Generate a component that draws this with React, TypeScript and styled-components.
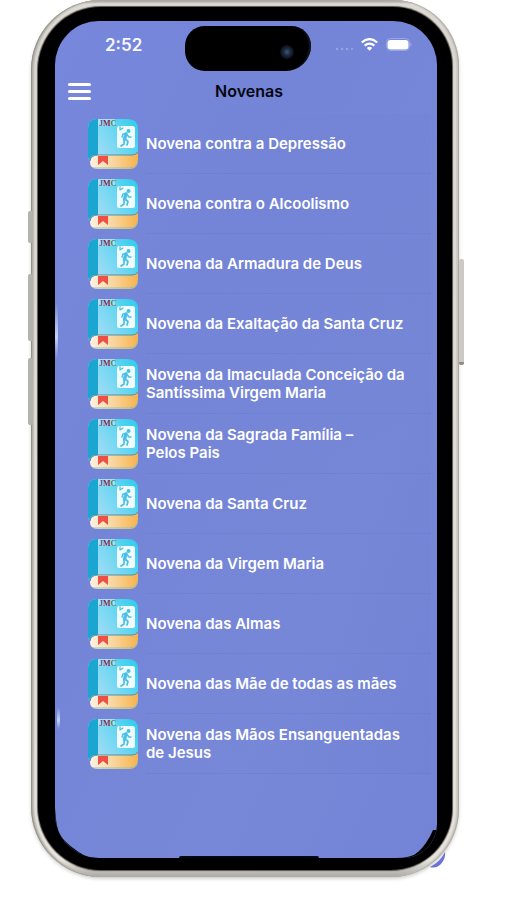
import React from "react";
import styled, { createGlobalStyle } from "styled-components";

const GlobalStyle = createGlobalStyle`
  *, *::before, *::after { box-sizing: border-box; }
  body { margin: 0; background: #fff; font-family: Inter, "Liberation Sans", sans-serif; }
`;

const Page = styled.main`
  padding: 0 48px 23px 31px;
`;

const Phone = styled.div`
  position: relative;
  padding: 7px;
  border-radius: 70px 66px 68px 70px;
  background: linear-gradient(to bottom, #98948f, #dedad4 4px, #e4e2dc 50%, #e9e7df 98%, #aaa9a2);
  box-shadow:
    inset 1px 0 1px #8f8e8a,
    inset 3px 0 2px #b4b2ac,
    inset -1px 0 1px #aaa8a3,
    inset -3px 0 2px #cbc8c2,
    0 2px 4px -1px #b9b9b5;
`;

const Bezel = styled.div`
  padding: 14px 15px 12px 17px;
  border-radius: 63px 59px 61px 63px;
  background: #000;
  box-shadow: 0 0 1px 1px #55534f;
`;

const Screen = styled.div`
  position: relative;
  overflow: hidden;
  padding-bottom: 84px;
  border-radius: 44px 44px 34px 44px;
  background: linear-gradient(115deg, #7787dc, #7484d6 35%, #7888d9 70%, #7383d5);
`;

const SideKey = styled.span<{ $side: "left" | "right"; $top: number; $height: number }>`
  position: absolute;
  ${(p) => p.$side}: ${(p) => (p.$side === "left" ? "-3px" : "-5px")};
  top: ${(p) => p.$top}px;
  width: 5px;
  height: ${(p) => p.$height}px;
  border-radius: 2px;
  background: ${(p) => (p.$side === "left" ? "#b4b3ae" : "#cdcac6")};
  border-bottom: ${(p) => (p.$side === "right" ? "3px solid #8d8c89" : "0")};
`;

const Fringe = styled.svg`
  position: absolute;
  right: 13px;
  bottom: 8px;
`;

const Glint = styled.span<{ $top: number; $height: number; $left: number }>`
  position: absolute;
  left: ${(p) => p.$left}px;
  top: ${(p) => p.$top}px;
  width: 3px;
  height: ${(p) => p.$height}px;
  border-radius: 50%;
  background: linear-gradient(transparent, #c5d2fa 60%, transparent);
`;

const StatusBar = styled.div`
  display: grid;
  grid-template-columns: 1fr 126px 1fr;
  padding: 5px 0 0 3px;
  color: #f7f8ff;
`;

const Clock = styled.time`
  padding: 8px 0 0 47px;
  font-size: 17px;
  font-weight: 600;
  line-height: 22px;
`;

const Island = styled.div`
  display: flex;
  align-items: center;
  justify-content: flex-end;
  height: 45px;
  padding-right: 17px;
  border-radius: 21px 21px 27px 21px;
  background: #000;
  box-shadow: inset -4px 0 2px -2px #17191f;
`;

const Lens = styled.span`
  width: 14px;
  height: 14px;
  margin-top: 6px;
  border-radius: 50%;
  background: radial-gradient(circle, #3a5979 0, #1d2b40 35%, #0a0e17 70%);
`;

const Indicators = styled.div`
  display: flex;
  align-items: center;
  justify-content: flex-end;
  gap: 8px;
  height: 36px;
  padding-right: 25px;
`;

const TopBar = styled.header`
  display: grid;
  grid-template-columns: 26px 1fr 26px;
  align-items: center;
  height: 40px;
  padding: 0 6px 0 12px;
`;

const MenuButton = styled.button`
  display: flex;
  flex-direction: column;
  gap: 4px;
  padding: 0 1px;
  border: 0;
  background: none;
  cursor: pointer;
`;

const MenuLine = styled.span`
  display: block;
  width: 23px;
  height: 3px;
  border-radius: 2px;
  background: #fff;
`;

const Title = styled.h1`
  margin: 0;
  text-align: center;
  font-size: 16px;
  font-weight: 600;
  line-height: 22px;
  color: #06070f;
`;

const List = styled.ul`
  margin: 3px 6px 0 0;
  padding: 0;
  list-style: none;
`;

const Row = styled.li`
  padding-left: 33px;
  background: linear-gradient(to right, transparent 40%, rgba(70, 85, 170, 0.04));
`;

const RowLink = styled.a`
  display: flex;
  align-items: center;
  gap: 8px;
  height: 60px;
  color: #fff;
  text-decoration: none;
`;

const RowLabel = styled.span`
  display: flex;
  flex: 1;
  align-items: center;
  align-self: stretch;
  padding: 1px 20px 0 0;
  border-bottom: 1px solid rgba(72, 88, 175, 0.12);
  font-size: 15px;
  font-weight: 600;
  line-height: 18px;
  white-space: pre-line;
`;

const Corner = styled.svg<{ $side: "left" | "right" }>`
  position: absolute;
  ${(p) => p.$side}: 0;
  bottom: 0;
`;

const HomeIndicator = styled.span`
  position: absolute;
  left: 50%;
  bottom: 0;
  width: 140px;
  height: 2px;
  margin-left: -67px;
  border-radius: 2px 2px 0 0;
  background: #060714;
`;

function BookIcon() {
  return (
    <svg width="50" height="50" viewBox="0 0 50 50" aria-hidden="true">
      <defs>
        <linearGradient id="cover" x1="0" y1="0.7" x2="1" y2="0.2">
          <stop offset="0.1" stopColor="#a3dcf4" />
          <stop offset="0.5" stopColor="#74d8f3" />
          <stop offset="1" stopColor="#35cdec" />
        </linearGradient>
        <linearGradient id="pages" x1="0" y1="0" x2="1" y2="0">
          <stop offset="0" stopColor="#fff1e4" />
          <stop offset="0.45" stopColor="#f9d8a4" />
          <stop offset="1" stopColor="#f8b24c" />
        </linearGradient>
      </defs>
      <path d="M9 0H40Q50 0 50 10V32Q49 37 44 37H6Q2 37 1 42L0 38V9Q0 0 9 0Z" fill="url(#cover)" />
      <path d="M9 0H10V36H7Q2 37 1 42L0 38V9Q0 0 9 0Z" fill="#1ba6d2" />
      <path d="M10 36H45Q48 36 50 34V41Q50 50 41 50H10Q2 50 2 43Q2 36 10 36Z" fill="url(#pages)" />
      <path d="M2 42Q3 36 10 36H44Q48 36 50 33" fill="none" stroke="#5791a3" strokeWidth="1" />
      <path d="M5 49H41Q49 49 50 41" fill="none" stroke="#86c3b4" strokeWidth="0.900" />
      <path d="M10 37H20V46L15 42L10 46Z" fill="#ee5045" />
      <rect x="10" y="0" width="17" height="7" fill="#dfeef5" opacity="0.5" />
      <text x="11" y="7" fontFamily="Liberation Serif, serif" fontWeight="700" fontSize="8">
        <tspan fill="#4756a8">J</tspan>
        <tspan fill="#762557">M</tspan>
        <tspan fill="#4c7c45">C</tspan>
      </text>
      <rect x="29" y="7" width="18" height="22" rx="2.500" fill="#effcff" />
      <circle cx="40.500" cy="12" r="2" fill="#4cc0e4" />
      <g fill="none" stroke="#4cc0e4" strokeLinecap="round" strokeLinejoin="round">
        <path d="M38 15L36.500 20" strokeWidth="3.400" />
        <path d="M34 18L35 15L38 14.500L41 18H43" strokeWidth="1.500" />
        <path d="M37 20L40 22.500L39 26M36 20L36 25L33 27" strokeWidth="1.700" />
        <path d="M32 7.500V11L35 9" strokeWidth="1.200" />
      </g>
    </svg>
  );
}

function StatusIcons() {
  return (
    <Indicators>
      <svg width="18" height="13" viewBox="0 0 18 13" aria-label="Sem sinal" fill="#99a6e6">
        <circle cx="2" cy="11" r="1.200" />
        <circle cx="7" cy="11" r="1.200" />
        <circle cx="12" cy="11" r="1.200" />
        <circle cx="17" cy="11" r="1" />
      </svg>
      <svg width="17" height="13" viewBox="0 0 17 13" aria-label="Wi-Fi">
        <g fill="none" stroke="#fff" strokeWidth="2.200">
          <path d="M0.800 4.500Q8.500 -2.300 16.200 4.500" />
          <path d="M3.600 7.700Q8.500 3.600 13.400 7.700" />
        </g>
        <path d="M5.800 9.900Q8.500 7.800 11.200 9.900L8.500 12.700Z" fill="#fff" />
      </svg>
      <svg width="26" height="13" viewBox="0 0 26 13" aria-label="Bateria">
        <rect x="0.500" y="0.500" width="23" height="12" rx="4" fill="none" stroke="#98a5e6" />
        <rect x="1.500" y="2" width="21" height="9.500" rx="3" fill="#fff" />
        <path d="M24.500 4.500Q26.500 6.500 24.500 8.500Z" fill="#aab5ed" />
      </svg>
    </Indicators>
  );
}

const novenas = [
  "Novena contra a Depressão",
  "Novena contra o Alcoolismo",
  "Novena da Armadura de Deus",
  "Novena da Exaltação da Santa Cruz",
  "Novena da Imaculada Conceição da Santíssima Virgem Maria",
  "Novena da Sagrada Família –\nPelos Pais",
  "Novena da Santa Cruz",
  "Novena da Virgem Maria",
  "Novena das Almas",
  "Novena das Mãe de todas as mães",
  "Novena das Mãos Ensanguentadas de Jesus",
];

export default function App() {
  return (
    <>
      <GlobalStyle />
      <Page>
        <Phone>
          <SideKey $side="left" $top={211} $height={32} />
          <SideKey $side="left" $top={274} $height={67} />
          <SideKey $side="left" $top={358} $height={67} />
          <SideKey $side="right" $top={259} $height={106} />
          <Fringe width="17" height="20" viewBox="0 0 17 20" aria-hidden="true">
            <path d="M16 3Q17 9 12 15Q7 20 1 18Q11 13 16 3Z" fill="#6a74d8" />
          </Fringe>
          <Bezel>
            <Screen>
              <Glint $left={0} $top={280} $height={60} />
              <Glint $left={2} $top={685} $height={24} />
              <StatusBar>
                <Clock>2:52</Clock>
                <Island>
                  <Lens />
                </Island>
                <StatusIcons />
              </StatusBar>
              <TopBar>
                <MenuButton type="button" aria-label="Menu">
                  <MenuLine />
                  <MenuLine />
                  <MenuLine />
                </MenuButton>
                <Title>Novenas</Title>
              </TopBar>
              <List>
                {novenas.map((name) => (
                  <Row key={name}>
                    <RowLink href="#">
                      <BookIcon />
                      <RowLabel>{name}</RowLabel>
                    </RowLink>
                  </Row>
                ))}
              </List>
              <Corner $side="left" width="34" height="50" viewBox="0 0 34 50" aria-hidden="true">
                <path d="M0 0Q1 17 4 26Q13 39 34 50H0Z" fill="#000" />
              </Corner>
              <Corner $side="right" width="42" height="28" viewBox="0 0 42 28" aria-hidden="true">
                <path d="M42 0H38Q32 14 23 22Q17 28 0 28H42Z" fill="#000" />
              </Corner>
              <HomeIndicator />
            </Screen>
          </Bezel>
        </Phone>
      </Page>
    </>
  );
}
